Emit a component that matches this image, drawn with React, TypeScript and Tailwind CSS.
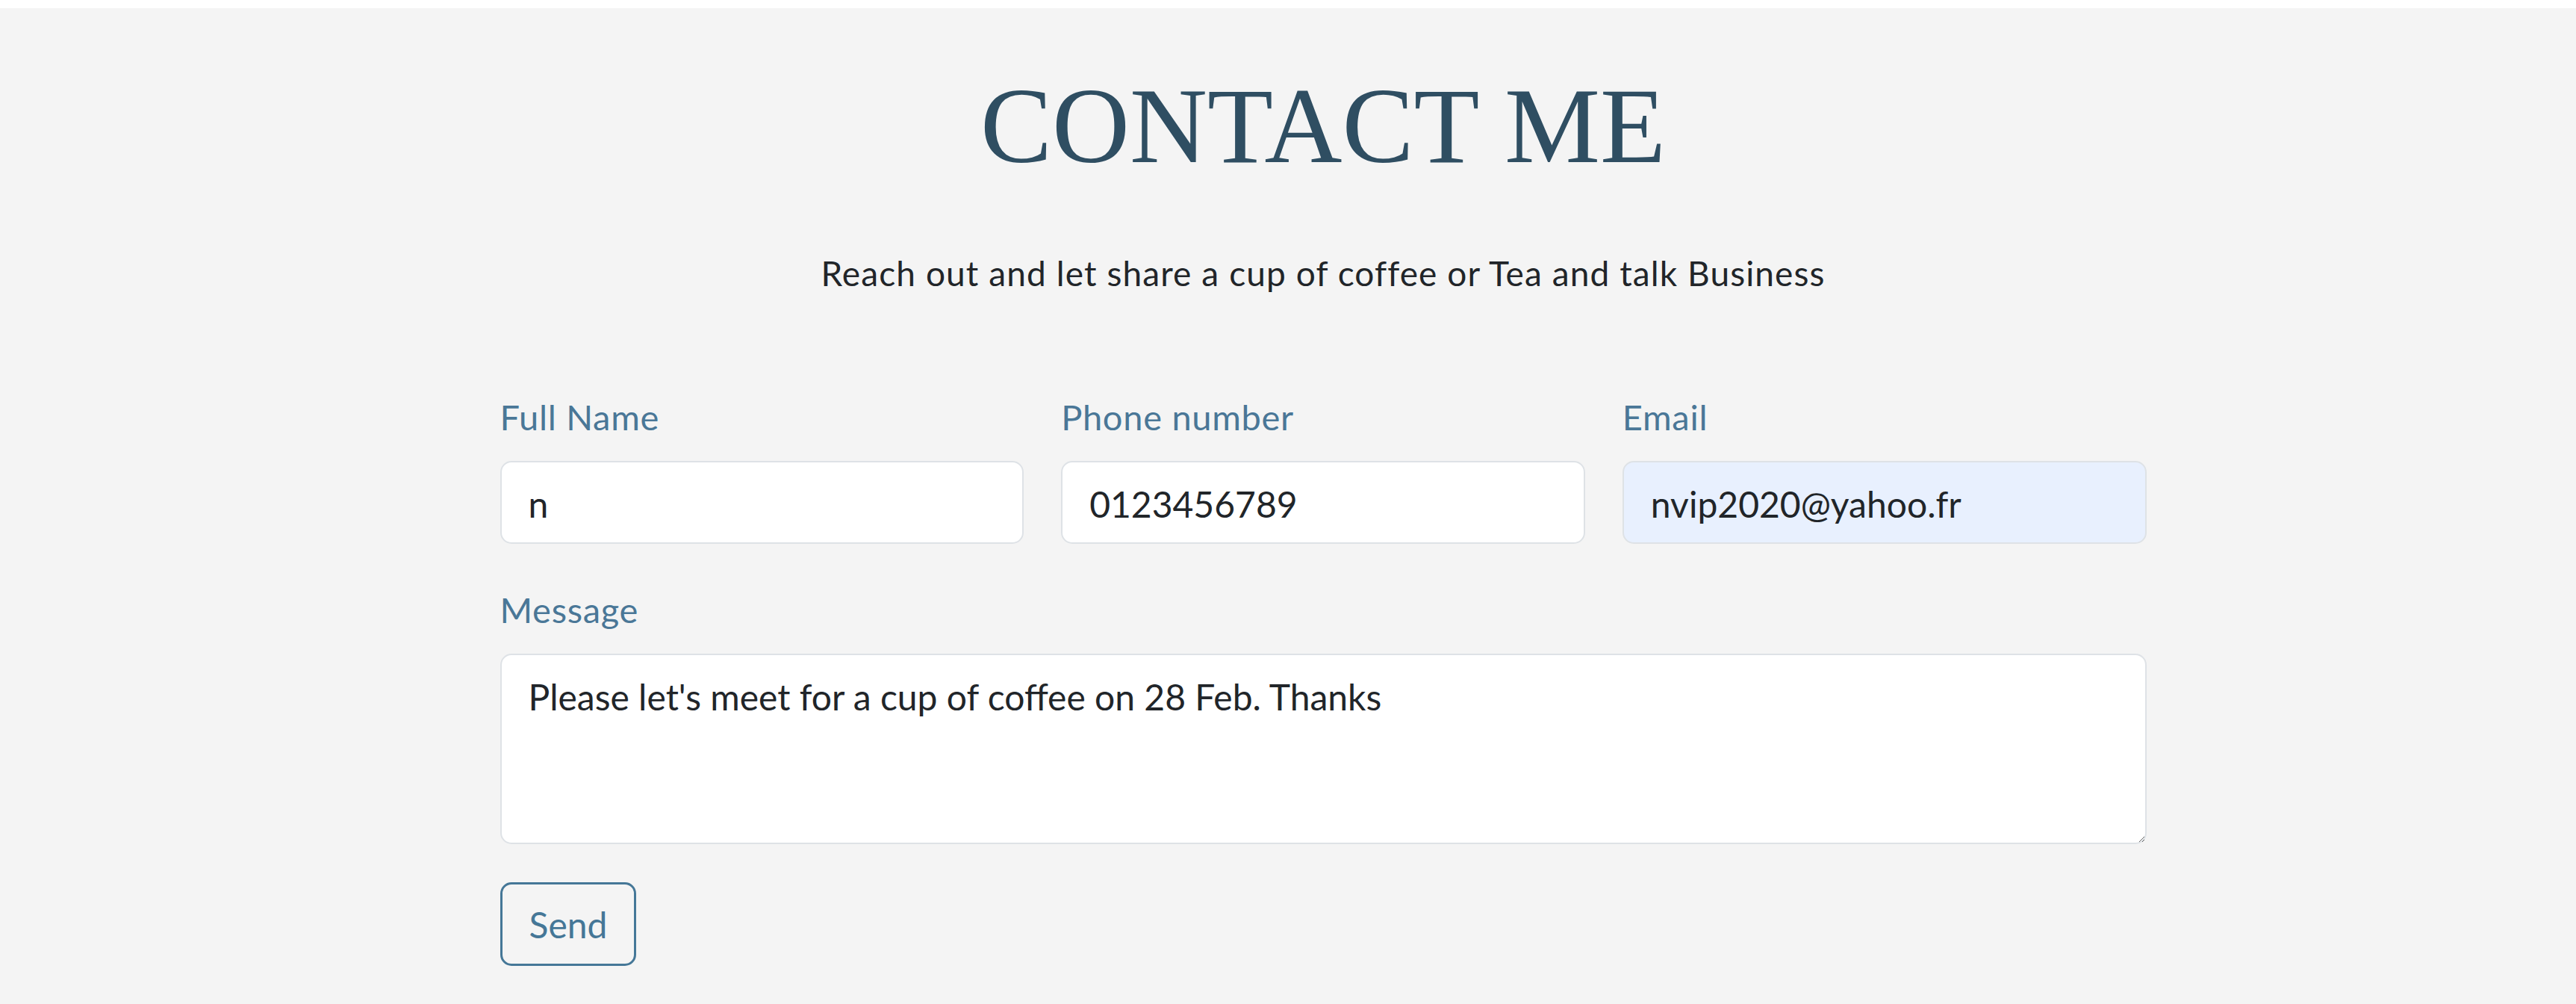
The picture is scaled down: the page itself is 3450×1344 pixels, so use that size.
import { useState } from "react"

const fields = [
  { id: "name", label: "Full Name", value: "n", autofill: false },
  { id: "phone", label: "Phone number", value: "0123456789", autofill: false },
  { id: "email", label: "Email", value: "nvip2020@yahoo.fr", autofill: true },
]

export default function App() {
  const [message, setMessage] = useState("Please let's meet for a cup of coffee on 28 Feb. Thanks")

  return (
    <div className="min-h-screen border-t-[11px] border-white bg-[#f4f4f4] pl-[94px] font-['Lato',sans-serif]">
      <div className="mx-auto w-[2205px]">
        {/* Heading */}
        <h1 className="pt-[86px] text-center font-['Liberation_Serif',serif] text-[144px] leading-none text-[#2f4e62]">
          CONTACT ME
        </h1>
        <p className="mt-[91px] text-center text-[46px] leading-[67.5px] tracking-[1.1px] text-[#212529]">
          Reach out and let share a cup of coffee or Tea and talk Business
        </p>

        {/* Form */}
        <form className="mt-[124px]" onSubmit={(e) => e.preventDefault()}>
          <div className="grid grid-cols-3 gap-x-[50px]">
            {fields.map((f) => (
              <div key={f.id} className="flex flex-col">
                <label htmlFor={f.id} className="text-[47px] leading-[69px] tracking-[0.7px] text-[#4a7797]">
                  {f.label}
                </label>
                <input
                  id={f.id}
                  type="text"
                  defaultValue={f.value}
                  className={`mt-[24px] h-[111px] rounded-[15px] border-2 border-[#dee2e6] px-[36px] pt-[4px] text-[48px] leading-[72px] text-[#212529] outline-none ${
                    f.autofill ? "bg-[#e8f0fe]" : "bg-white"
                  }`}
                />
              </div>
            ))}
          </div>

          <div className="mt-[54px] flex flex-col">
            <label htmlFor="message" className="text-[47px] leading-[69px] tracking-[0.7px] text-[#4a7797]">
              Message
            </label>
            <textarea
              id="message"
              value={message}
              onChange={(e) => setMessage(e.target.value)}
              className="mt-[24px] h-[255px] rounded-[15px] border-2 border-[#dee2e6] bg-white px-[36px] pt-[20px] text-[48px] leading-[72px] text-[#212529] outline-none"
            />
          </div>

          <button
            type="submit"
            className="mt-[51px] h-[112px] rounded-[15px] border-[3px] border-[#457797] px-[36px] pt-[2px] text-[48px] text-[#457797]"
          >
            Send
          </button>
        </form>
      </div>
    </div>
  )
}
